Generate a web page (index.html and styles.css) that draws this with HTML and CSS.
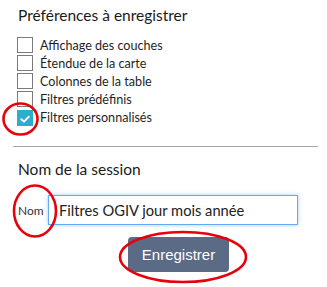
FILE: index.html
```html
<!DOCTYPE html>
<html lang="fr">
<head>
<meta charset="utf-8">
<link rel="stylesheet" href="styles.css">
</head>
<body>
<div class="panel">
  <h2 class="title">Préférences à enregistrer</h2>
  <ul class="prefs">
    <li class="pref"><span class="box"></span><span class="lbl">Affichage des couches</span></li>
    <li class="pref"><span class="box"></span><span class="lbl">Étendue de la carte</span></li>
    <li class="pref"><span class="box"></span><span class="lbl">Colonnes de la table</span></li>
    <li class="pref"><span class="box"></span><span class="lbl">Filtres prédéfinis</span></li>
    <li class="pref"><span class="box checked"><svg viewBox="0 0 16 16" width="16" height="16"><path d="M3.8 8.2 L6.9 11 L12.3 5.4" fill="none" stroke="#fff" stroke-width="2.2" stroke-linecap="round" stroke-linejoin="round"/></svg></span><span class="lbl">Filtres personnalisés</span></li>
  </ul>
  <hr class="sep">
  <h2 class="title2">Nom de la session</h2>
  <div class="namerow">
    <label class="nomlbl">Nom</label>
    <div class="input">Filtres OGIV jour mois année</div>
  </div>
  <div class="btnrow"><button class="btn">Enregistrer</button></div>
</div>
<svg class="marks" width="327" height="287" viewBox="0 0 327 287">
  <ellipse cx="20.5" cy="119" rx="17" ry="15.5" fill="none" stroke="#e8000b" stroke-width="2.6"/>
  <ellipse cx="35" cy="211" rx="21" ry="25.5" fill="none" stroke="#e8000b" stroke-width="2.6"/>
  <ellipse cx="183" cy="257" rx="63" ry="25" fill="none" stroke="#e8000b" stroke-width="2.6"/>
</svg>
</body>
</html>
```
FILE: styles.css
```css
html, body { margin: 0; padding: 0; background: #fff; }
body { width: 327px; height: 287px; overflow: hidden; position: relative; font-family: "Lato", "Liberation Sans", sans-serif; color: #222; }
.panel { padding: 5px 0 0 18px; }
.title { margin: 0; font-size: 15.5px; font-weight: 400; line-height: 20px; color: #1a1a1a; }
.prefs { list-style: none; margin: 11px 0 0 -1px; padding: 0; }
.pref { display: flex; align-items: center; height: 18px; }
.box { box-sizing: border-box; width: 16px; height: 16px; border: 1px solid #7a7a7a; background: #fff; margin-right: 7px; display: flex; }
.box.checked { border-color: #2aaecb; background: #2aaecb; margin-top: 2px; }
.lbl { font-size: 12.6px; color: #1f1f1f; }
.sep { margin: 20px 0 0 -5px; width: 305px; border: 0; border-top: 1px solid #a6a6a6; height: 0; }
.title2 { margin: 12px 0 0 0; font-size: 15.5px; font-weight: 400; line-height: 20px; color: #1a1a1a; }
.namerow { display: flex; align-items: center; margin-top: 16px; }
.nomlbl { font-size: 12px; color: #333; width: 30px; }
.input { box-sizing: border-box; width: 250px; height: 30px; border: 1px solid #64aaf2; box-shadow: 0 0 4px rgba(100,170,242,0.6); padding-left: 10px; font-size: 14.7px; line-height: 28px; color: #222; }
.btnrow { margin: 12px 0 0 110px; }
.btn { width: 101px; height: 35px; border: 0; border-radius: 4px; background: #5b6b85; color: #fff; font-family: "Liberation Sans", Arial, sans-serif; font-size: 15px; padding: 0; }
.marks { position: absolute; left: 0; top: 0; pointer-events: none; }
```
